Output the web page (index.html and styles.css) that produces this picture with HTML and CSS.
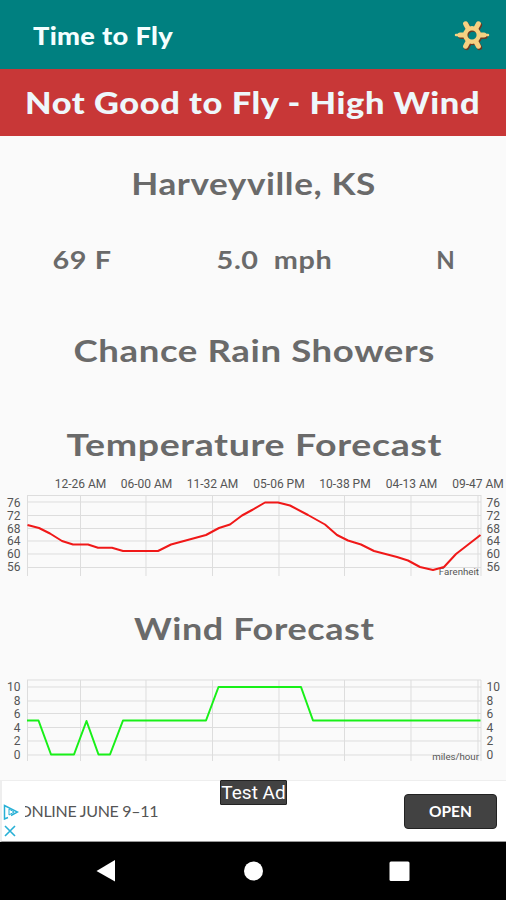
FILE: index.html
```
<!DOCTYPE html>
<html lang="en">
<head>
  <meta charset="UTF-8">
  <meta name="viewport" content="width=device-width, initial-scale=1.0">
  <title>Time to Fly</title>
  <link rel="stylesheet" href="styles.css">
</head>
<body>
  <!-- App bar -->
  <div class="header">
    <h1>Time to Fly</h1>
    <svg class="settings" width="38" height="34" viewBox="0 0 38 34">
      <g transform="translate(1 1.3)" fill="none" stroke="#6b3a24" stroke-linecap="round">
        <circle cx="19" cy="17" r="6.8" stroke-width="4.4"/>
        <path stroke-width="5.4" d="M28 17h3M10 17H7M23.5 9.2l1.9-3.4M14.5 9.2l-1.9-3.4M23.5 24.8l1.9 3.4M14.5 24.8l-1.9 3.4"/>
      </g>
      <g fill="none" stroke="#f5d182" stroke-linecap="round">
        <circle cx="19" cy="17" r="6.8" stroke-width="4.4"/>
        <path stroke-width="5" d="M28 17h3M10 17H7M23.5 9.2l1.9-3.4M14.5 9.2l-1.9-3.4M23.5 24.8l1.9 3.4M14.5 24.8l-1.9 3.4"/>
        <path stroke-width="2.5" d="M30 17h5M8 17H3"/>
      </g>
    </svg>
  </div>
  <div class="banner"><span>Not Good to Fly - High Wind</span></div>

  <!-- Current conditions -->
  <div class="content">
    <h2 class="city">Harveyville, KS</h2>
    <div class="current">
      <span class="temp">69 F</span>
      <span class="wind">5.0&nbsp; mph</span>
      <span class="direction">N</span>
    </div>
    <h2 class="conditions">Chance Rain Showers</h2>

    <h2 class="temp-title">Temperature Forecast</h2>
    <svg class="chart" width="506" height="110" viewBox="0 470 506 110">
      <g class="times">
        <text x="80.5" y="488">12-26 AM</text>
        <text x="146.5" y="488">06-00 AM</text>
        <text x="212.5" y="488">11-32 AM</text>
        <text x="279" y="488">05-06 PM</text>
        <text x="345" y="488">10-38 PM</text>
        <text x="411.5" y="488">04-13 AM</text>
        <text x="478" y="488">09-47 AM</text>
      </g>
      <path class="grid" d="M27 495.5H481M27 502H481M27 515.5H481M27 528.5H481M27 541H481M27 554H481M27 567.5H481M27.5 495V576M80.5 495V576M146 495V576M212.5 495V576M279 495V576M344.5 495V576M411 495V576M478 495V576M481 495V576"/>
      <g class="left">
        <text x="20.5" y="506.5">76</text>
        <text x="20.5" y="519.5">72</text>
        <text x="20.5" y="532.5">68</text>
        <text x="20.5" y="545">64</text>
        <text x="20.5" y="558">60</text>
        <text x="20.5" y="570.5">56</text>
      </g>
      <g class="right">
        <text x="486.5" y="506.5">76</text>
        <text x="486.5" y="519.5">72</text>
        <text x="486.5" y="532.5">68</text>
        <text x="486.5" y="545">64</text>
        <text x="486.5" y="558">60</text>
        <text x="486.5" y="570.5">56</text>
      </g>
      <text class="unit" x="479" y="575">Farenheit</text>
      <polyline class="line red" points="27.5,525 39,528 50,533.5 62,541 73,544.5 88,544.5 98,547.8 112,547.8 123,551 158,551 171,544.5 206,535 219,528 230,524.5 242,515.5 253,509.5 265,502.5 278,502.5 290,505.5 308,515 325,524.5 337,535 348,540.5 361,544.5 374,551 397,557 408,560.5 420,567 433,570 444,567 456,554 480.5,535"/>
    </svg>

    <h2 class="wind-title">Wind Forecast</h2>
    <svg class="chart" width="506" height="90" viewBox="0 675 506 90">
      <path class="grid" d="M27 680H481M27 687H481M27 701H481M27 713.5H481M27 727.5H481M27 741H481M27 755H481M27.5 680V761M80.5 680V761M146 680V761M212.5 680V761M279 680V761M344.5 680V761M411 680V761M478 680V761M481 680V761"/>
      <g class="left">
        <text x="20.5" y="691">10</text>
        <text x="20.5" y="704.5">8</text>
        <text x="20.5" y="718">6</text>
        <text x="20.5" y="731.5">4</text>
        <text x="20.5" y="745">2</text>
        <text x="20.5" y="758.5">0</text>
      </g>
      <g class="right">
        <text x="486.5" y="691">10</text>
        <text x="486.5" y="704.5">8</text>
        <text x="486.5" y="718">6</text>
        <text x="486.5" y="731.5">4</text>
        <text x="486.5" y="745">2</text>
        <text x="486.5" y="758.5">0</text>
      </g>
      <text class="unit" x="479" y="760">miles/hour</text>
      <polyline class="line green" points="27,720.5 38.5,720.5 51,754.5 74,754.5 86.5,721 98.5,754.5 110,754.5 123,720.5 206,720.5 218.5,687 301,687 313,720.5 480.5,720.5"/>
    </svg>
  </div>

  <!-- Ad -->
  <div class="ad">
    <div class="ad-icons">
      <svg width="16" height="16" viewBox="0 0 16 16" fill="none" stroke="#27b0d6" stroke-width="1.5"><path d="M5 13.5L1.5 15V1.5L14.5 8 8 11.5"/><path d="M6 5v6l5-3z" stroke-width="1"/></svg>
      <svg width="14" height="14" viewBox="0 0 14 14" fill="none" stroke="#27b0d6" stroke-width="1.6"><path d="M2 2l10 10M12 2L2 12"/></svg>
    </div>
    <div class="ad-text"><span>ONLINE JUNE 9–11</span></div>
    <button class="open-button">OPEN</button>
    <div class="test-ad">Test Ad</div>
  </div>

  <!-- Navigation bar -->
  <div class="nav">
    <svg width="506" height="58" viewBox="0 0 506 58" fill="#ffffff">
      <path d="M96.5 29L115 18v21.5z"/>
      <circle cx="253.5" cy="29" r="9.5"/>
      <rect x="389.5" y="19.5" width="20" height="19.5" rx="1.5"/>
    </svg>
  </div>
</body>
</html>
```
FILE: styles.css
```
body {
  font-family: Lato, 'Open Sans', sans-serif;
  margin: 0;
  width: 506px;
  height: 900px;
  background-color: #fafafa;
  color: #6a6a6a;
  display: flex;
  flex-direction: column;
  overflow: hidden;
}
h1, h2 {
  margin: 0;
  font-weight: 700;
  white-space: nowrap;
}
.header {
  height: 69px;
  box-sizing: border-box;
  padding: 0 15px 0 33px;
  display: flex;
  justify-content: space-between;
  align-items: center;
  background-color: #008080;
  color: #f4ffff;
}
.header h1 {
  font-size: 25px;
  font-weight: 900;
  letter-spacing: 0.3px;
  transform: scaleX(1.09);
  transform-origin: left;
}
.banner {
  height: 67px;
  line-height: 67px;
  background-color: #c83737;
  color: #eef7fb;
  text-align: center;
  font-size: 30px;
  font-weight: 900;
  letter-spacing: 0.5px;
  white-space: nowrap;
}
.banner span {
  display: inline-block;
  transform: scaleX(1.146);
}
.content {
  height: 644px;
  display: flex;
  flex-direction: column;
}
.content h2 {
  align-self: center;
  font-size: 30px;
  line-height: 40px;
  height: 40px;
  letter-spacing: 0.5px;
}
.content .city {
  margin-top: 27px;
  transform: translateX(1px) scaleX(1.17);
}
.current {
  display: grid;
  grid-template-columns: 164px 221px 121px;
  height: 40px;
  line-height: 40px;
  margin-top: 37px;
  text-align: center;
  font-size: 24px;
  font-weight: 700;
}
.temp, .wind {
  letter-spacing: 0.5px;
  transform: scaleX(1.2);
}
.content .conditions {
  margin-top: 50px;
  transform: translateX(1px) scaleX(1.22);
}
.content .temp-title {
  margin-top: 54px;
  transform: translateX(1px) scaleX(1.25);
}
.chart {
  display: block;
  margin-top: 6px;
  font-family: Roboto, sans-serif;
  font-size: 12px;
  fill: #555555;
}
.content .wind-title {
  margin-top: 28px;
  transform: translateX(1px) scaleX(1.2);
}
.wind-title + .chart {
  margin-top: 27px;
}
.times {
  text-anchor: middle;
}
.left, .unit {
  text-anchor: end;
}
.unit {
  font-size: 9.7px;
}
.grid {
  stroke: #dddddd;
  stroke-width: 1;
  fill: none;
}
.line {
  fill: none;
  stroke-width: 2;
  stroke-linejoin: round;
}
.red {
  stroke: #f01818;
}
.green {
  stroke: #18f018;
}
.ad {
  height: 62px;
  box-sizing: border-box;
  position: relative;
  display: flex;
  align-items: center;
  padding-right: 9px;
  background-color: #ffffff;
  border-top: 1px solid #eeeeee;
  border-left: 2px solid #eeeeee;
  border-bottom: 1px solid #999999;
}
.ad-icons {
  width: 22px;
  height: 34px;
  display: flex;
  flex-direction: column;
  justify-content: space-between;
  padding: 20px 0 0 1px;
}
.ad-icons svg {
  display: block;
}
.ad-text {
  flex: 1;
  overflow: hidden;
  white-space: nowrap;
  font-size: 16px;
  line-height: 20px;
  letter-spacing: -0.3px;
  color: #555555;
}
.ad-text span {
  margin-left: -6px;
}
.open-button {
  width: 93px;
  height: 35px;
  padding: 0;
  border: 1px solid #222222;
  border-radius: 4px;
  background-color: #424242;
  color: #ffffff;
  font-family: Lato, sans-serif;
  font-size: 15.5px;
  font-weight: 700;
}
.test-ad {
  position: absolute;
  top: -1px;
  left: 218px;
  width: 67px;
  height: 25px;
  line-height: 24px;
  box-sizing: border-box;
  border: 1px solid #222222;
  border-radius: 1px;
  background-color: #424242;
  color: #ffffff;
  font-family: Roboto, sans-serif;
  font-size: 19px;
  text-align: center;
  white-space: nowrap;
}
.nav {
  height: 58px;
  background-color: #000000;
}
.nav svg {
  display: block;
}
```
